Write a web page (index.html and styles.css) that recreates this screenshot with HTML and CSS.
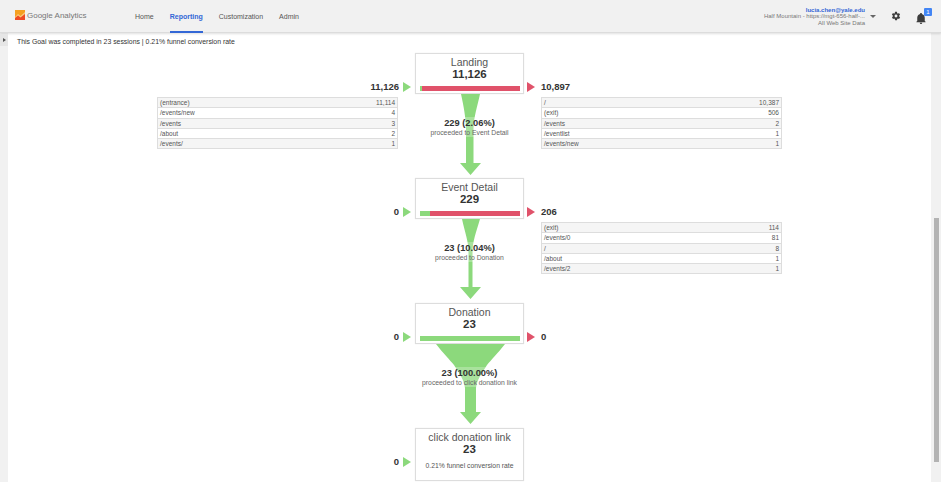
FILE: index.html
```html
<!DOCTYPE html>
<html>
<head>
  <meta charset="UTF-8">
  <title>Funnel Visualization</title>
  <link rel="stylesheet" href="styles.css">
</head>
<body>

  <header class="topbar">
    <div class="brand">
      <svg class="brand-mark" width="10" height="10" viewBox="0 0 10 10">
        <rect width="10" height="10" fill="#f5a020"/>
        <path d="M0 10 V7 L3 4 L5.500 6 L10 2 V5 L5.500 8.500 L3 6.500 L0 9.500Z" fill="#fff3d6" opacity="0.5"/>
        <path d="M0 10 V8 L3 5.500 L5.500 7.500 L10 4 V10Z" fill="#ee4b24"/>
      </svg>
      <span>Google Analytics</span>
    </div>
    <nav class="nav">
      <a href="#">Home</a>
      <a href="#" class="active">Reporting</a>
      <a href="#">Customization</a>
      <a href="#">Admin</a>
    </nav>
    <div class="account">
      <div class="account-text">
        <div class="email">lucia.chen@yale.edu</div>
        <div>Half Mountain - https://mgt-656-half-...</div>
        <div>All Web Site Data</div>
      </div>
      <span class="caret"></span>
    </div>
    <svg class="gear" width="10" height="10" viewBox="0 0 24 24">
      <path fill="#3c3c3c" fill-rule="evenodd" d="M19.400 13a7.500 7.500 0 0 0 0-2l2.100-1.600a.5.5 0 0 0 .1-.6l-2-3.500a.5.5 0 0 0-.6-.2l-2.500 1a7.300 7.300 0 0 0-1.700-1l-.4-2.700A.5.5 0 0 0 14 2h-4a.5.5 0 0 0-.5.4l-.4 2.700a7.300 7.300 0 0 0-1.700 1l-2.500-1a.5.5 0 0 0-.6.2l-2 3.500a.5.5 0 0 0 .1.6L4.600 11a7.500 7.500 0 0 0 0 2l-2.100 1.600a.5.5 0 0 0-.1.6l2 3.500a.5.5 0 0 0 .6.2l2.500-1a7.300 7.300 0 0 0 1.700 1l.4 2.700a.5.5 0 0 0 .5.4h4a.5.5 0 0 0 .5-.4l.4-2.700a7.300 7.300 0 0 0 1.700-1l2.500 1a.5.5 0 0 0 .6-.2l2-3.500a.5.5 0 0 0-.1-.6zM12 15.500a3.500 3.500 0 1 1 0-7 3.500 3.500 0 0 1 0 7z"/>
    </svg>
    <div class="bell">
      <svg width="10" height="11" viewBox="0 0 24 26">
        <path fill="#3c3c3c" d="M12 26a3 3 0 0 0 3-3H9a3 3 0 0 0 3 3zm9-7v-8c0-4.500-3-8-7-9V1a2 2 0 0 0-4 0v1c-4 1-7 4.500-7 9v8l-2 2v1h22v-1z"/>
      </svg>
      <span class="badge">1</span>
    </div>
  </header>

  <div class="main">
    <aside class="rail">
      <button class="rail-toggle"></button>
    </aside>

    <section class="content">
      <p class="summary">This Goal was completed in 23 sessions | 0.21% funnel conversion rate</p>

      <div class="funnel">

        <div class="stage">
          <div class="side side-in">
            <div class="count"><b>11,126</b><span class="arrow green"></span></div>
            <table class="pages">
              <tr><td>(entrance)</td><td>11,114</td></tr>
              <tr><td>/events/new</td><td>4</td></tr>
              <tr><td>/events</td><td>3</td></tr>
              <tr><td>/about</td><td>2</td></tr>
              <tr><td>/events/</td><td>1</td></tr>
            </table>
          </div>
          <div class="center">
            <div class="box">
              <div class="name">Landing</div>
              <div class="num">11,126</div>
              <div class="bar"><i style="width: 2.060%"></i></div>
            </div>
            <div class="link">
              <svg width="109" height="84" viewBox="0 0 109 84">
                <path d="M46 0 H65 C62 14 59 22 58.500 34 V69 H66 L55.500 81 L45 69 H51 V34 C50.500 22 49 14 46 0Z" fill="#8cd97c"/>
              </svg>
              <div class="link-label"><b>229 (2.06%)</b><span>proceeded to Event Detail</span></div>
            </div>
          </div>
          <div class="side side-out">
            <div class="count"><span class="arrow red"></span><b>10,897</b></div>
            <table class="pages">
              <tr><td>/</td><td>10,387</td></tr>
              <tr><td>(exit)</td><td>506</td></tr>
              <tr><td>/events</td><td>2</td></tr>
              <tr><td>/eventlist</td><td>1</td></tr>
              <tr><td>/events/new</td><td>1</td></tr>
            </table>
          </div>
        </div>

        <div class="stage">
          <div class="side side-in">
            <div class="count"><b>0</b><span class="arrow green"></span></div>
          </div>
          <div class="center">
            <div class="box">
              <div class="name">Event Detail</div>
              <div class="num">229</div>
              <div class="bar"><i style="width: 10.040%"></i></div>
            </div>
            <div class="link">
              <svg width="109" height="84" viewBox="0 0 109 84">
                <path d="M47 0 H65 C61 14 57.500 22 57.500 34 V68 H66 L55.500 80 L45 68 H53.500 V34 C53.500 22 50 14 47 0Z" fill="#8cd97c"/>
              </svg>
              <div class="link-label"><b>23 (10.04%)</b><span>proceeded to Donation</span></div>
            </div>
          </div>
          <div class="side side-out">
            <div class="count"><span class="arrow red"></span><b>206</b></div>
            <table class="pages">
              <tr><td>(exit)</td><td>114</td></tr>
              <tr><td>/events/0</td><td>81</td></tr>
              <tr><td>/</td><td>8</td></tr>
              <tr><td>/about</td><td>1</td></tr>
              <tr><td>/events/2</td><td>1</td></tr>
            </table>
          </div>
        </div>

        <div class="stage">
          <div class="side side-in">
            <div class="count"><b>0</b><span class="arrow green"></span></div>
          </div>
          <div class="center">
            <div class="box">
              <div class="name">Donation</div>
              <div class="num">23</div>
              <div class="bar"><i style="width: 100%"></i></div>
            </div>
            <div class="link">
              <svg width="109" height="84" viewBox="0 0 109 84">
                <path d="M21 0 H90 C83 9 76 16 72 21 C67 29 62 35 61 44 V68 H66 L55.500 80 L45 68 H50 V44 C49 35 44 29 39 21 C35 16 28 9 21 0Z" fill="#8cd97c"/>
              </svg>
              <div class="link-label"><b>23 (100.00%)</b><span>proceeded to click donation link</span></div>
            </div>
          </div>
          <div class="side side-out">
            <div class="count"><span class="arrow red"></span><b>0</b></div>
          </div>
        </div>

        <div class="stage stage-last">
          <div class="side side-in">
            <div class="count"><b>0</b><span class="arrow green"></span></div>
          </div>
          <div class="center">
            <div class="box box-last">
              <div class="name">click donation link</div>
              <div class="num">23</div>
              <div class="rate">0.21% funnel conversion rate</div>
            </div>
          </div>
          <div class="side side-out"></div>
        </div>

      </div>
    </section>

    <div class="scrollbar"><div class="thumb"></div></div>
  </div>

</body>
</html>
```

FILE: styles.css
```css
html, body {
  margin: 0;
  height: 482px;
  overflow: hidden;
}
body {
  font-family: "Liberation Sans", Arial, sans-serif;
  color: #333;
  background: #fff;
}
.topbar {
  height: 33px;
  box-sizing: border-box;
  background: #f1f1f1;
  border-bottom: 1px solid #dcdcdc;
  box-shadow: 0 1px 2px rgba(0, 0, 0, 0.12);
  display: flex;
  align-items: center;
  position: relative;
}
.brand {
  width: 135px;
  padding-left: 15px;
  box-sizing: border-box;
  display: flex;
  align-items: center;
  gap: 2px;
  font-size: 8px;
  color: #777;
  margin-top: -2px;
}
.nav {
  display: flex;
  gap: 16px;
  height: 100%;
  font-size: 7px;
}
.nav a {
  color: #555;
  text-decoration: none;
  line-height: 33px;
  box-sizing: border-box;
}
.nav a.active {
  color: #3367d6;
  font-weight: bold;
  border-bottom: 2px solid #3367d6;
  height: 33px;
}
.account {
  margin-left: auto;
  margin-top: 1px;
  display: flex;
  align-items: center;
  gap: 5px;
}
.account-text {
  text-align: right;
  font-size: 6px;
  line-height: 6.500px;
  color: #777;
}
.account-text .email {
  color: #3367d6;
  font-weight: bold;
}
.caret {
  border: 3px solid transparent;
  border-top: 3.500px solid #666;
  border-bottom: 0;
}
.gear {
  margin-left: 15px;
  margin-top: -1px;
  display: block;
}
.bell {
  margin-left: 15px;
  margin-right: 9px;
  width: 16px;
  height: 16px;
  margin-top: -1px;
  position: relative;
}
.bell svg {
  position: absolute;
  left: 0;
  bottom: 0;
}
.badge {
  position: absolute;
  right: 0;
  top: 0;
  width: 8px;
  height: 8px;
  border-radius: 1px;
  background: #4285f4;
  color: #fff;
  font-size: 6px;
  line-height: 8px;
  text-align: center;
}
.main {
  display: flex;
  height: 449px;
}
.rail {
  width: 8px;
  background: #f1f1f1;
  padding-top: 1px;
  box-sizing: border-box;
}
.rail-toggle {
  display: block;
  width: 8px;
  height: 12px;
  padding: 0;
  background: #e6e6e6;
  border: 0;
  position: relative;
}
.rail-toggle::after {
  content: "";
  position: absolute;
  left: 3px;
  top: 4px;
  border: 2px solid transparent;
  border-left: 3px solid #555;
  border-right: 0;
}
.content {
  flex: 1;
  min-width: 0;
}
.summary {
  margin: 0;
  padding: 4px 0 0 9px;
  height: 20px;
  box-sizing: border-box;
  font-size: 6.900px;
  line-height: 10px;
  color: #333;
}
.scrollbar {
  width: 10px;
  background: #f1f1f1;
  padding: 185px 2px 0 3px;
  box-sizing: border-box;
}
.thumb {
  height: 244px;
  background: #b3b3b3;
}
.funnel {
  width: 625px;
  margin: 0 auto;
}
.stage {
  display: grid;
  grid-template-columns: 258px 109px 258px;
  height: 125px;
}
.stage-last {
  height: 54px;
}
.side {
  padding-top: 29px;
}
.count {
  height: 10px;
  display: flex;
  align-items: center;
  gap: 4px;
  font-size: 9.500px;
  color: #333;
}
.count b {
  margin-top: -1px;
}
.side-in .count {
  justify-content: flex-end;
  padding-right: 4px;
}
.side-out .count {
  padding-left: 3px;
  gap: 6px;
}
.arrow {
  width: 0;
  height: 0;
  border-top: 5px solid transparent;
  border-bottom: 5px solid transparent;
  border-left: 8px solid;
}
.arrow.green {
  border-left-color: #8cd97c;
}
.arrow.red {
  border-left-color: #e0526a;
}
.pages {
  width: 241px;
  margin-top: 5px;
  border-collapse: collapse;
  font-size: 6.500px;
  color: #555;
  border: 1px solid #ddd;
}
.side-out .pages {
  margin-left: 17px;
}
.pages td {
  height: 10.300px;
  padding: 0 2px;
  line-height: 9px;
  border-top: 1px solid #ddd;
  box-sizing: border-box;
}
.pages td:last-child {
  text-align: right;
}
.pages tr:nth-child(odd) {
  background: #f5f5f5;
}
.box {
  height: 41px;
  box-sizing: border-box;
  border: 1px solid #ddd;
  box-shadow: 0 0 1px rgba(0, 0, 0, 0.1);
  background: #fff;
  text-align: center;
  padding-top: 2px;
}
.box-last {
  height: 53px;
}
.name {
  font-size: 10.500px;
  line-height: 12px;
  color: #555;
}
.num {
  font-size: 11.500px;
  line-height: 13px;
  font-weight: bold;
  color: #333;
}
.bar {
  height: 5px;
  margin: 5px 3px 0 4px;
  background: #e0526a;
}
.bar i {
  display: block;
  height: 100%;
  background: #8cd97c;
}
.rate {
  margin-top: 6px;
  font-size: 6.800px;
  color: #555;
}
.link {
  height: 84px;
  position: relative;
}
.link svg {
  display: block;
}
.link-label {
  position: absolute;
  left: 50%;
  top: 23px;
  transform: translateX(-50%);
  white-space: nowrap;
  text-align: center;
  background: rgba(255, 255, 255, 0.25);
}
.link-label b {
  display: block;
  font-size: 9.300px;
  line-height: 11px;
  margin-top: 1px;
  color: #333;
}
.link-label span {
  display: block;
  font-size: 6.800px;
  line-height: 8px;
  color: #666;
}
```
